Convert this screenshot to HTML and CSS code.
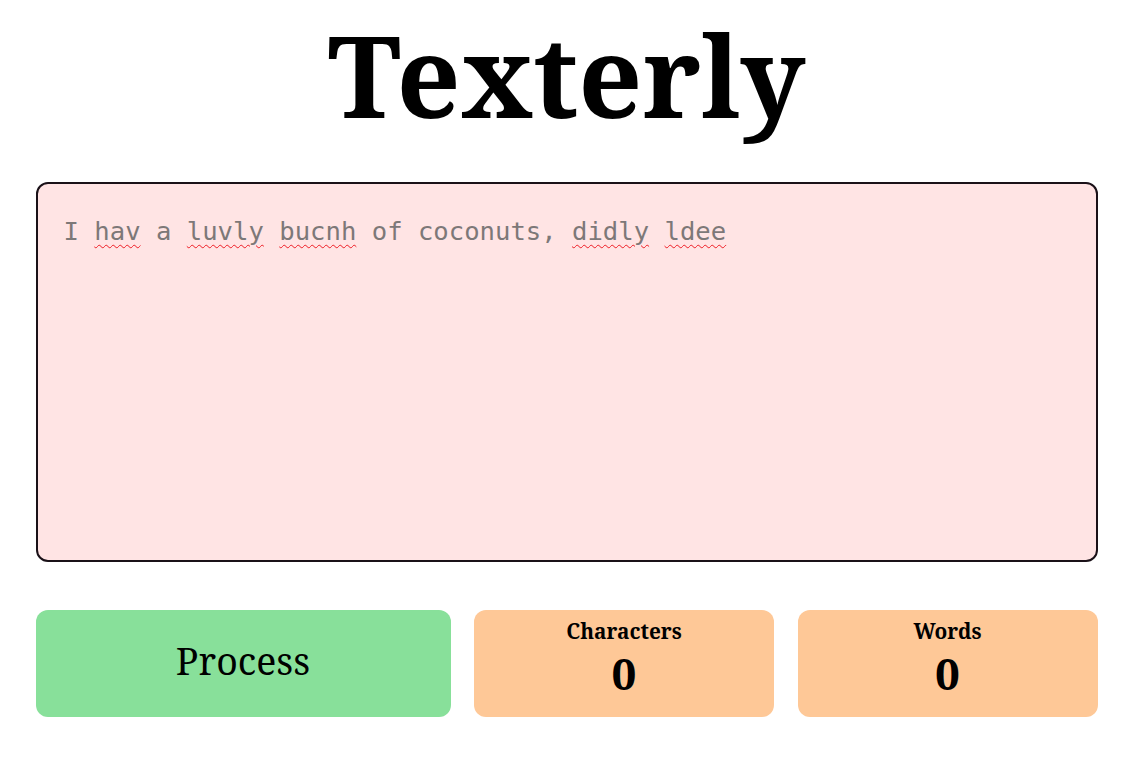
FILE: index.html
```html
<!DOCTYPE html>
<html lang="en">
<head>
<meta charset="utf-8">
<title>Texterly</title>
<link rel="stylesheet" href="styles.css">
</head>
<body>
<main class="app">
  <h1 class="title">Texterly</h1>
  <div class="editor" role="textbox" aria-multiline="true">I <span class="typo">hav</span> a <span class="typo">luvly</span> <span class="typo">bucnh</span> of coconuts, <span class="typo">didly</span> <span class="typo">ldee</span></div>
  <div class="controls">
    <button class="process" type="button">Process</button>
    <div class="stat">
      <div class="stat-label">Characters</div>
      <div class="stat-value">0</div>
    </div>
    <div class="stat">
      <div class="stat-label">Words</div>
      <div class="stat-value">0</div>
    </div>
  </div>
</main>
</body>
</html>
```

FILE: styles.css
```css
html, body {
  margin: 0;
  padding: 0;
  background: #ffffff;
}

body {
  font-family: "Noto Serif", "DejaVu Serif", serif;
  color: #000;
}

.app {
  width: 1062px;
  margin: 0 auto;
  padding-top: 1px;
  display: flex;
  flex-direction: column;
}

.title {
  margin: -3px 0 0 0;
  text-align: center;
  font-size: 112px;
  font-weight: 700;
  line-height: 153px;
}

.editor {
  margin-top: 31px;
  box-sizing: border-box;
  height: 380px;
  border: 2px solid #1a1118;
  border-radius: 12px;
  background: #ffe4e4;
  padding: 29px 26px;
  font-family: "DejaVu Sans Mono", monospace;
  font-size: 25.6px;
  line-height: 36px;
  color: #7d7878;
}

.typo {
  text-decoration: underline wavy #ee1c24;
  text-decoration-thickness: 1.3px;
  text-underline-offset: 4px;
}

.controls {
  margin-top: 48px;
  display: grid;
  grid-template-columns: 415px 300px 300px;
  column-gap: 23.5px;
  height: 107px;
}

.process {
  border: none;
  border-radius: 12px;
  background: #88e09a;
  font-family: "Noto Serif", "DejaVu Serif", serif;
  font-size: 37.5px;
  color: #000;
  padding: 0 0 6px 0;
}

.stat {
  border-radius: 12px;
  background: #fec897;
  display: flex;
  flex-direction: column;
  align-items: center;
  padding-top: 8px;
}

.stat-label {
  font-size: 20.8px;
  font-weight: 700;
  line-height: 26px;
}

.stat-value {
  font-size: 44px;
  font-weight: 700;
  line-height: 58px;
}
```
